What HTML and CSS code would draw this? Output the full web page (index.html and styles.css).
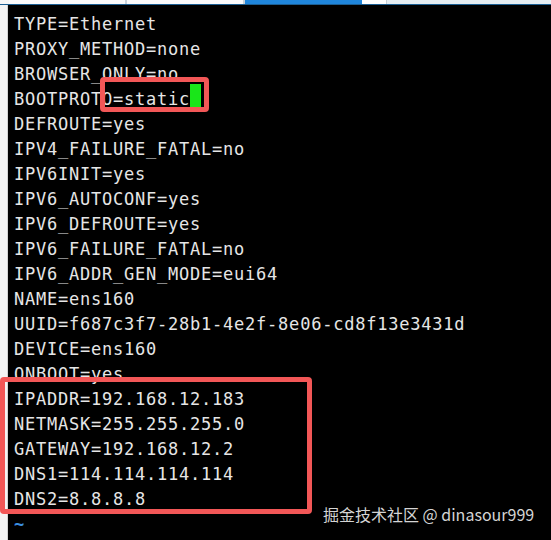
FILE: index.html
```html
<!DOCTYPE html>
<html lang="zh">
<head>
<meta charset="utf-8">
<link rel="stylesheet" href="styles.css">
</head>
<body>
<div class="window">
  <div class="tabs">
    <div class="tab-gap"></div>
    <div class="tab"></div>
    <div class="tab"></div>
    <div class="tab active"></div>
    <div class="tab short"></div>
    <div class="tab rest"></div>
  </div>
  <div class="tabline"></div>
  <div class="main">
    <div class="gutter"></div>
    <div class="term">
      <div class="ln">TYPE=Ethernet</div>
      <div class="ln">PROXY_METHOD=none</div>
      <div class="ln">BROWSER_ONLY=no</div>
      <div class="ln">BOOTPROTO=static<span class="cursor"></span></div>
      <div class="ln">DEFROUTE=yes</div>
      <div class="ln">IPV4_FAILURE_FATAL=no</div>
      <div class="ln">IPV6INIT=yes</div>
      <div class="ln">IPV6_AUTOCONF=yes</div>
      <div class="ln">IPV6_DEFROUTE=yes</div>
      <div class="ln">IPV6_FAILURE_FATAL=no</div>
      <div class="ln">IPV6_ADDR_GEN_MODE=eui64</div>
      <div class="ln">NAME=ens160</div>
      <div class="ln">UUID=f687c3f7-28b1-4e2f-8e06-cd8f13e3431d</div>
      <div class="ln">DEVICE=ens160</div>
      <div class="ln">ONBOOT=yes</div>
      <div class="ln">IPADDR=192.168.12.183</div>
      <div class="ln">NETMASK=255.255.255.0</div>
      <div class="ln">GATEWAY=192.168.12.2</div>
      <div class="ln">DNS1=114.114.114.114</div>
      <div class="ln">DNS2=8.8.8.8</div>
      <div class="ln"><span class="tilde">~</span></div>
    </div>
  </div>
  <div class="mark mark-proto"></div>
  <div class="mark mark-net"></div>
  <div class="watermark">掘金技术社区 @ dinasour999</div>
</div>
</body>
</html>
```
FILE: styles.css
```css
html, body {
  margin: 0;
  padding: 0;
  background: #000;
}
.window {
  position: relative;
  width: 551px;
  height: 540px;
  overflow: hidden;
  background: #000;
}
.tabs {
  display: flex;
  height: 4px;
  background: #f2f4f6;
}
.tab-gap {
  width: 9px;
  background: #f6f6f6;
}
.tab {
  width: 116px;
  background: #fbfbfb;
  border-right: 2px solid #c9d3db;
}
.tab.active {
  background: #1f86dc;
  border-right: none;
  width: 117px;
}
.tab.short {
  width: 24px;
  background: #ffffff;
  border-right: 1px solid #c7cfd6;
}
.tab.rest {
  flex: 1;
  border-right: none;
  background: #e6edf2;
}
.tabline {
  height: 1px;
  background: #1c5f93;
}
.main {
  display: flex;
}
.gutter {
  width: 7px;
  flex: none;
  height: 535px;
  background: #f3f3f3;
  border-right: 1px solid #d2d2d2;
}
.term {
  display: flex;
  flex-direction: column;
  align-items: flex-start;
  padding: 7px 0 0 6px;
  font-family: "DejaVu Sans Mono", monospace;
  font-size: 17px;
  letter-spacing: 0.77px;
  line-height: 25px;
  color: #e6e6e6;
}
.ln {
  white-space: pre;
  height: 25px;
}
.cursor {
  display: inline-block;
  width: 11px;
  height: 24px;
  margin-top: -3px;
  vertical-align: -3px;
  background: #19e619;
}
.tilde {
  color: #3b8fe0;
  font-weight: bold;
}
.mark {
  position: absolute;
  border: 5px solid #f25757;
  border-radius: 4px;
  box-sizing: border-box;
}
.mark-proto {
  left: 100px;
  top: 77px;
  width: 109px;
  height: 35px;
}
.mark-net {
  left: 0;
  top: 377px;
  width: 312px;
  height: 137px;
}
.watermark {
  position: absolute;
  left: 323px;
  top: 503px;
  font-family: "Noto Sans CJK SC", "Noto Sans", sans-serif;
  font-size: 16px;
  line-height: 22px;
  color: #d4d4d4;
  white-space: nowrap;
}
```
